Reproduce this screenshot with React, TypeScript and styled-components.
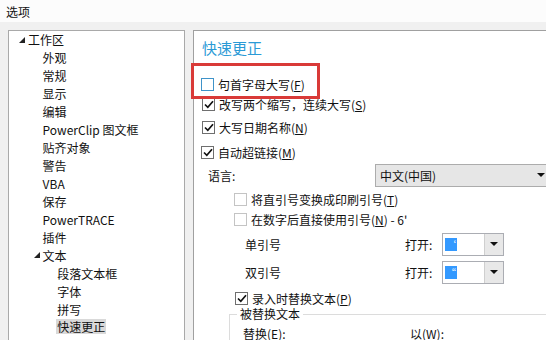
import React from "react";
import styled, { createGlobalStyle } from "styled-components";

const Global = createGlobalStyle`
  html, body { margin: 0; padding: 0; }
  body {
    width: 546px; height: 340px; overflow: hidden;
    font-family: "Noto Sans CJK SC", "Noto Sans", sans-serif;
    font-size: 12px; color: #111;
    background: #f0f0f0;
  }
  * { box-sizing: border-box; }
`;

const Window = styled.div`
  width: 546px; height: 340px; display: flex; flex-direction: column; overflow: hidden;
`;

const TitleBar = styled.div`
  height: 22px; background: #fcfcfc; padding-left: 6px;
  display: flex; align-items: center; font-size: 12px; flex: none;
`;

const Body = styled.div`
  flex: 1; display: flex; gap: 8px; padding: 8px 0 0 8px; background: #f0f0f0; min-height: 0;
`;

const Tree = styled.div`
  width: 177px; flex: none; background: #fff; border: 1px solid #a9a9a9; border-bottom: none;
  display: flex; flex-direction: column;
`;

const TreeRow = styled.div<{ $level: number }>`
  height: 17.95px; display: flex; align-items: center; flex: none;
  padding-left: ${(p) => 10 + p.$level * 14.6}px; white-space: nowrap;
`;

const Toggle = styled.span`
  width: 9px; flex: none; display: flex; align-items: center;
`;

const ItemText = styled.span<{ $selected?: boolean }>`
  line-height: 15px; padding: 0 1px; margin-left: -1px;
  background: ${(p) => (p.$selected ? "#d9d9d9" : "transparent")};
`;

const Panel = styled.div`
  flex: 1; position: relative; background: #fff; border-top: 1px solid #a0a0a0; border-left: 1px solid #a0a0a0;
  display: flex; flex-direction: column; min-width: 0;
`;

const Heading = styled.div`
  height: 32px; padding-left: 8px; display: flex; align-items: center;
  font-size: 15px; color: #2a9ad6; flex: none;
`;

const Highlight = styled.div`
  position: absolute; left: -3px; top: 32px; width: 129px; height: 36px;
  border: 3px solid #d93a38; pointer-events: none;
`;

const Row = styled.div<{ $mt: number; $pl: number; $h?: number }>`
  height: ${(p) => p.$h ?? 20}px; margin-top: ${(p) => p.$mt}px; padding-left: ${(p) => p.$pl}px;
  display: flex; align-items: center; flex: none; white-space: nowrap;
`;

const Box = styled.span<{ $tone: "normal" | "hover" | "disabled" }>`
  width: 13px; height: 13px; flex: none; margin-right: 4px; background: #fff;
  border: 1px solid ${(p) => (p.$tone === "hover" ? "#3f93c9" : p.$tone === "disabled" ? "#c4c4c4" : "#6f6f6f")};
  display: flex; align-items: center; justify-content: center;
`;

const Label = styled.span<{ $w?: number }>`
  ${(p) => (p.$w ? `width: ${p.$w}px; flex: none;` : "")}
`;

const Select = styled.div`
  width: 175px; height: 23px; flex: none; background: #e6e6e6; border: 1px solid #acacac;
  display: flex; align-items: center; justify-content: space-between; padding: 0 4px 0 4px;
`;

const Combo = styled.div`
  width: 62px; height: 23px; flex: none; border: 1px solid #abadb3; background: #fff; display: flex;
`;

const ComboField = styled.div`
  flex: 1; display: flex; align-items: center; padding-left: 2px;
`;

const Sel = styled.span`
  background: #3399ff; color: #fff; height: 13px; line-height: 13px; font-size: 10px; padding: 0 1px;
`;

const ComboButton = styled.div`
  width: 19px; flex: none; background: #e8e8e8; border-left: 1px solid #cfcfcf;
  display: flex; align-items: center; justify-content: center;
`;

const Group = styled.fieldset`
  margin: -1px 0 0 35px; padding: 0; border: none; border-top: 1px solid #dcdcdc;
  border-left: 1px solid #dcdcdc; min-width: 0; flex: 1;
`;

const Legend = styled.legend`
  padding: 0 3px; margin-left: 7px; font-size: 12px; line-height: 14px;
`;

const GroupRow = styled.div`
  display: flex; height: 20px; align-items: center; margin-top: 2px; padding-left: 13px;
`;

const Check = () => (
  <svg width="10" height="9" viewBox="0 0 10 9">
    <path d="M1 4.5 L3.8 7.3 L9 1.2" fill="none" stroke="#111" strokeWidth="1.7" />
  </svg>
);

const Tri = () => (
  <svg width="6" height="6" viewBox="0 0 6 6">
    <polygon points="6,0 6,6 0,6" fill="#222" />
  </svg>
);

const Down = () => (
  <svg width="8" height="4" viewBox="0 0 8 4">
    <polygon points="0,0 8,0 4,4" fill="#111" />
  </svg>
);

const treeItems: { t: string; l: number; open?: boolean; sel?: boolean }[] = [
  { t: "工作区", l: 0, open: true },
  { t: "外观", l: 1 },
  { t: "常规", l: 1 },
  { t: "显示", l: 1 },
  { t: "编辑", l: 1 },
  { t: "PowerClip 图文框", l: 1 },
  { t: "贴齐对象", l: 1 },
  { t: "警告", l: 1 },
  { t: "VBA", l: 1 },
  { t: "保存", l: 1 },
  { t: "PowerTRACE", l: 1 },
  { t: "插件", l: 1 },
  { t: "文本", l: 1, open: true },
  { t: "段落文本框", l: 2 },
  { t: "字体", l: 2 },
  { t: "拼写", l: 2 },
  { t: "快速更正", l: 2, sel: true },
];

export default function App() {
  return (
    <Window>
      <Global />
      <TitleBar>选项</TitleBar>
      <Body>
        <Tree>
          {treeItems.map((it) => (
            <TreeRow key={it.t} $level={it.l}>
              <Toggle>{it.open ? <Tri /> : null}</Toggle>
              <ItemText $selected={it.sel}>{it.t}</ItemText>
            </TreeRow>
          ))}
        </Tree>
        <Panel>
          <Heading>快速更正</Heading>
          <Row $mt={11} $pl={7}>
            <Box $tone="hover" />
            <span>句首字母大写(<u>F</u>)</span>
          </Row>
          <Row $mt={0} $pl={8}>
            <Box $tone="normal"><Check /></Box>
            <span>改写两个缩写，连续大写(<u>S</u>)</span>
          </Row>
          <Row $mt={3} $pl={8}>
            <Box $tone="normal"><Check /></Box>
            <span>大写日期名称(<u>N</u>)</span>
          </Row>
          <Row $mt={5} $pl={7}>
            <Box $tone="normal"><Check /></Box>
            <span>自动超链接(<u>M</u>)</span>
          </Row>
          <Row $mt={1} $pl={14} $h={24}>
            <Label $w={167}>语言:</Label>
            <Select>
              <span>中文(中国)</span>
              <Down />
            </Select>
          </Row>
          <Row $mt={2} $pl={40}>
            <Box $tone="disabled" />
            <span>将直引号变换成印刷引号(<u>T</u>)</span>
          </Row>
          <Row $mt={0} $pl={40}>
            <Box $tone="disabled" />
            <span>在数字后直接使用引号(<u>N</u>) - 6'</span>
          </Row>
          <Row $mt={3} $pl={51} $h={24}>
            <Label $w={160}>单引号</Label>
            <Label $w={37}>打开:</Label>
            <Combo>
              <ComboField><Sel>‘</Sel></ComboField>
              <ComboButton><Down /></ComboButton>
            </Combo>
          </Row>
          <Row $mt={4} $pl={51} $h={24}>
            <Label $w={160}>双引号</Label>
            <Label $w={37}>打开:</Label>
            <Combo>
              <ComboField><Sel>“</Sel></ComboField>
              <ComboButton><Down /></ComboButton>
            </Combo>
          </Row>
          <Row $mt={4} $pl={41}>
            <Box $tone="normal"><Check /></Box>
            <span>录入时替换文本(<u>P</u>)</span>
          </Row>
          <Group>
            <Legend>被替换文本</Legend>
            <GroupRow>
              <Label $w={167}>替换(<u>E</u>):</Label>
              <span>以(<u>W</u>):</span>
            </GroupRow>
          </Group>
          <Highlight />
        </Panel>
      </Body>
    </Window>
  );
}
